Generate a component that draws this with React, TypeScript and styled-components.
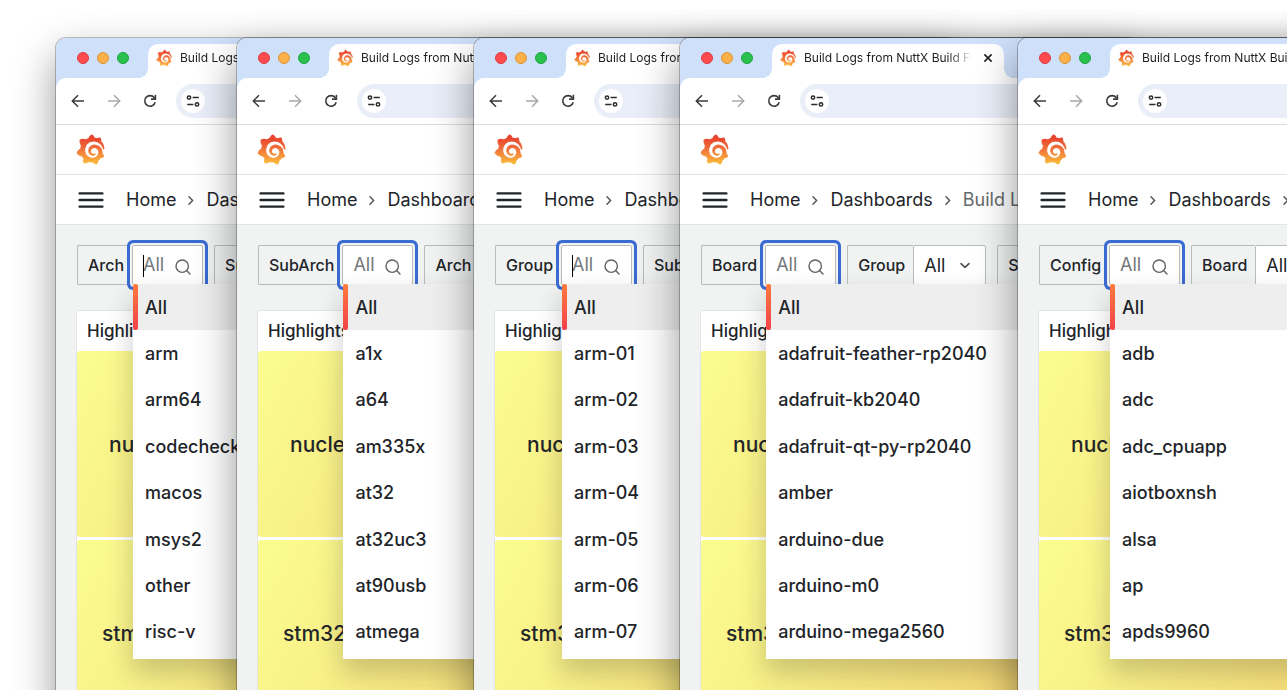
import React from "react";
import styled, { createGlobalStyle, css } from "styled-components";
import { SiGrafana } from "react-icons/si";

const INK = "#212428";
const PAGE = "#f1f3f3";
const LINE = "#b9bcbe";

const GlobalStyle = createGlobalStyle`
  * { box-sizing: border-box; }
  body {
    margin: 0;
    background: #fff;
    color: ${INK};
    font-family: Inter, "Liberation Sans", sans-serif;
  }
  button, input, select { font: inherit; color: inherit; }
`;

const Desktop = styled.main`
  position: relative;
  min-height: 100vh;
  overflow: hidden;
`;

const Defs = styled.svg`
  position: absolute;
  width: 0;
  height: 0;
`;

const BrowserWindow = styled.section<{ $left: number }>`
  position: absolute;
  isolation: isolate;
  top: 38px;
  bottom: -80px;
  left: ${(p) => p.$left}px;
  width: 900px;
  display: flex;
  flex-direction: column;
  overflow: hidden;
  border-radius: 10px;
  background: #fff;
  box-shadow:
    0 0 0 1px rgba(0, 0, 0, 0.24),
    0 18px 42px rgba(0, 0, 0, 0.42);
`;

const TabStrip = styled.div`
  display: flex;
  height: 48px;
  margin-bottom: -8px;
  padding: 6px 0 8px 21px;
  background: #cfe0fb;
`;

const Lights = styled.div`
  display: flex;
  align-items: center;
  gap: 8px;
  width: 71px;
  height: 28px;
`;

const Light = styled.button<{ $fill: string; $edge: string }>`
  width: 12px;
  height: 12px;
  padding: 0;
  border: 1px solid ${(p) => p.$edge};
  border-radius: 50%;
  background: ${(p) => p.$fill};
`;

const Tab = styled.div`
  position: relative;
  display: flex;
  align-items: flex-start;
  width: 232px;
  height: 34px;
  padding: 6px 10px 0 8px;
  border-radius: 10px 10px 0 0;
  background: #fff;

  &::before,
  &::after {
    content: "";
    position: absolute;
    bottom: 0;
    width: 10px;
    height: 10px;
  }
  &::before {
    right: 100%;
    background: radial-gradient(circle at 0 0, transparent 10px, #fff 10px);
  }
  &::after {
    left: 100%;
    background: radial-gradient(circle at 100% 0, transparent 10px, #fff 10px);
  }
`;

const TabTitle = styled.span`
  flex: 1;
  margin-left: 8px;
  overflow: hidden;
  white-space: nowrap;
  font-size: 12px;
  line-height: 16px;
  color: #1f1f1f;
  mask-image: linear-gradient(to right, #000 145px, transparent 168px);
`;

const PlainButton = styled.button`
  display: grid;
  place-items: center;
  padding: 0;
  border: 0;
  background: none;
`;

const TabClose = styled(PlainButton)`
  width: 12px;
  height: 16px;
`;

const Toolbar = styled.div`
  display: flex;
  align-items: center;
  height: 47px;
  padding-left: 12px;
  border-bottom: 1px solid #d9dbdd;
  border-radius: 10px 10px 0 0;
  background: #fff;
`;

const NavButton = styled(PlainButton)<{ $off?: boolean }>`
  width: 20px;
  height: 20px;
  margin-right: 16px;
  color: ${(p) => (p.$off ? "#a9a9a9" : "#3c3c3c")};
`;

const Omnibox = styled.div`
  flex: 1;
  display: flex;
  align-items: center;
  height: 34px;
  padding-left: 5px;
  border-radius: 17px;
  background: #e9eef8;
`;

const SiteInfo = styled(PlainButton)`
  width: 24px;
  height: 24px;
  border-radius: 50%;
  background: #fff;
`;

const Bar = styled.div`
  display: flex;
  align-items: center;
  height: 50px;
  padding: 0 20px;
  border-bottom: 1px solid #e3e4e5;
`;

const MenuButton = styled(PlainButton)`
  width: 30px;
  height: 30px;
  margin-right: 20px;
`;

const Crumbs = styled.nav`
  display: flex;
  align-items: center;
  gap: 12px;
  font-size: 18px;
  line-height: 24px;
  white-space: nowrap;
`;

const Crumb = styled.a<{ $current?: boolean }>`
  color: ${(p) => (p.$current ? "#65686b" : INK)};
  text-decoration: none;
`;

const Page = styled.div`
  flex: 1;
  display: flex;
  flex-direction: column;
  gap: 25px;
  padding: 20px 20px 0 21px;
  background: ${PAGE};
`;

const Variables = styled.div`
  display: flex;
  gap: 11px;
`;

const Variable = styled.div`
  position: relative;
  display: flex;
`;

const Label = styled.label`
  height: 40px;
  padding: 0 8px 0 10px;
  border: 1px solid ${LINE};
  border-right: 0;
  border-radius: 2px 0 0 2px;
  font-size: 16px;
  font-weight: 500;
  line-height: 38px;
  white-space: nowrap;
`;

const box = css`
  display: flex;
  align-items: center;
  height: 40px;
  border: 1px solid ${LINE};
  border-radius: 2px;
  background: #fff;
`;

const SearchBox = styled.div`
  ${box}
  position: relative;
  width: 71px;
  padding: 0 11px 0 10px;
  box-shadow: 0 0 0 2px ${PAGE}, 0 0 0 5px #3a6bd2;
  color: #5f6266;

  svg { margin-top: 4px; flex: none; }
`;

const SearchInput = styled.input`
  flex: 1;
  min-width: 0;
  padding: 0;
  border: 0;
  outline: 0;
  background: none;
  font-size: 18px;
  line-height: 24px;

  &::placeholder { color: #75787c; opacity: 1; }
`;

const Caret = styled.span`
  position: absolute;
  top: 9px;
  left: 10px;
  width: 1px;
  height: 22px;
  background: #000;
`;

const SelectBox = styled.div`
  ${box}
  position: relative;
  width: 73px;

  svg {
    position: absolute;
    right: 13px;
    pointer-events: none;
  }
`;

const Select = styled.select`
  width: 100%;
  height: 100%;
  padding: 0 10px;
  border: 0;
  appearance: none;
  background: none;
  font-size: 18px;
`;

const Menu = styled.ul`
  position: absolute;
  z-index: 2;
  top: 39px;
  left: calc(100% - 70px);
  display: grid;
  grid-auto-rows: 1fr;
  width: 290px;
  height: 375px;
  margin: 0;
  padding: 0 0 4px;
  list-style: none;
  background: #fff;
  box-shadow: 0 13px 24px 1px rgba(24, 26, 27, 0.2);
`;

const Option = styled.li<{ $active: boolean }>`
  position: relative;
  display: flex;
  align-items: center;
  padding-left: 12px;
  background: ${(p) => (p.$active ? "#eeeeee" : "transparent")};
  font-size: 18px;
  font-weight: 500;
  white-space: nowrap;

  ${(p) =>
    p.$active &&
    css`
      &::before {
        content: "";
        position: absolute;
        inset: 0 auto 0 0;
        width: 5px;
        border-radius: 2px;
        background: linear-gradient(#ff7a3c, #f2424a);
      }
    `}
`;

const Panel = styled.section`
  display: flex;
  flex-direction: column;
  border: 1px solid #e2e4e5;
  border-radius: 2px;
  margin-left: -1px;
  background: #fff;
`;

const PanelTitle = styled.h2`
  height: 40px;
  margin: 0;
  padding-left: 10px;
  font-size: 17px;
  font-weight: 500;
  line-height: 40px;
`;

const Tiles = styled.div`
  display: grid;
  gap: 3px;
`;

const Tile = styled.div<{ $indent: number }>`
  display: flex;
  align-items: center;
  height: 186px;
  padding-left: ${(p) => p.$indent}px;
  border-radius: 3px;
  background: linear-gradient(120deg, #fafd91, #f8ec85 160px, #f4d06f 420px);
  font-size: 21px;
  font-weight: 500;
  color: #24262a;
`;

const BackIcon = () => (
  <svg width="14" height="14" viewBox="0 0 14 14" fill="none" stroke="currentColor" strokeWidth="1.5">
    <path d="M13 7H1.6M7 1.2 1.3 7 7 12.8" />
  </svg>
);

const ForwardIcon = () => (
  <svg width="14" height="14" viewBox="0 0 14 14" fill="none" stroke="currentColor" strokeWidth="1.5">
    <path d="M1 7h11.4M7 1.2 12.7 7 7 12.8" />
  </svg>
);

const ReloadIcon = () => (
  <svg width="14" height="14" viewBox="0 0 14 14" fill="none" stroke="currentColor" strokeWidth="1.6">
    <path d="M12.2 8.2A5.3 5.3 0 1 1 11.2 3.6L12.4 5" />
    <path d="M12.4 0.8V5.1H8" />
  </svg>
);

const TuneIcon = () => (
  <svg width="14" height="12" viewBox="0 0 14 12" fill="none" stroke="#2b2b2b" strokeWidth="1.5">
    <circle cx="3" cy="2.6" r="1.7" />
    <path d="M6.6 2.6h6.2M1.2 9.4h6.2" />
    <circle cx="11" cy="9.4" r="1.7" />
  </svg>
);

const CloseIcon = () => (
  <svg width="10" height="10" viewBox="0 0 10 10" stroke="#1f1f1f" strokeWidth="1.6">
    <path d="M1.4 1.4l7.2 7.2M8.6 1.4 1.4 8.6" />
  </svg>
);

const HamburgerIcon = () => (
  <svg width="26" height="18" viewBox="0 0 26 18" stroke={INK} strokeWidth="2.4" strokeLinecap="round">
    <path d="M1.6 2.4h22.8M1.6 9h22.8M1.6 15.6h22.8" />
  </svg>
);

const CrumbArrow = () => (
  <svg width="6" height="10" viewBox="0 0 6 10" fill="none" stroke="#55585b" strokeWidth="1.5" strokeLinecap="round">
    <path d="M1 1.8 4.6 5.5 1 9.2" />
  </svg>
);

const SearchIcon = () => (
  <svg width="16" height="16" viewBox="0 0 16 16" fill="none" stroke="currentColor" strokeWidth="1.4" strokeLinecap="round">
    <circle cx="7.2" cy="7.2" r="6.2" />
    <path d="M11.8 11.8 15 15" />
  </svg>
);

const ChevronDown = () => (
  <svg width="14" height="10" viewBox="0 0 14 10" fill="none" stroke="#4a4d50" strokeWidth="1.5" strokeLinecap="round" strokeLinejoin="round">
    <path d="M3 3.6 7 7.4 11 3.6" />
  </svg>
);

const GrafanaLogo = ({ size }: { size: number }) => (
  <SiGrafana
    size={size}
    fill="url(#grafana)"
    stroke="url(#grafana)"
    strokeWidth="0.9"
    overflow="visible"
    aria-label="Grafana"
  />
);

type View = {
  left: number;
  name: string;
  caret?: boolean;
  others: string[];
  options: string[];
};

const views: View[] = [
  {
    left: 56,
    name: "Arch",
    caret: true,
    others: ["SubArch"],
    options: ["All", "arm", "arm64", "codechecker", "macos", "msys2", "other", "risc-v"],
  },
  {
    left: 237,
    name: "SubArch",
    others: ["Arch"],
    options: ["All", "a1x", "a64", "am335x", "at32", "at32uc3", "at90usb", "atmega"],
  },
  {
    left: 474,
    name: "Group",
    caret: true,
    others: ["SubArch"],
    options: ["All", "arm-01", "arm-02", "arm-03", "arm-04", "arm-05", "arm-06", "arm-07"],
  },
  {
    left: 680,
    name: "Board",
    others: ["Group", "SubArch"],
    options: [
      "All",
      "adafruit-feather-rp2040",
      "adafruit-kb2040",
      "adafruit-qt-py-rp2040",
      "amber",
      "arduino-due",
      "arduino-m0",
      "arduino-mega2560",
    ],
  },
  {
    left: 1018,
    name: "Config",
    others: ["Board"],
    options: ["All", "adb", "adc", "adc_cpuapp", "aiotboxnsh", "alsa", "ap", "apds9960"],
  },
];

function BuildLogsWindow({ left, name, caret, others, options }: View) {
  const id = `var-${name}`;
  return (
    <BrowserWindow $left={left}>
      <TabStrip>
        <Lights>
          <Light $fill="#fe4c4e" $edge="#dd3b40" aria-label="Close window" />
          <Light $fill="#fbb04a" $edge="#dd9638" aria-label="Minimize window" />
          <Light $fill="#29c14c" $edge="#1ea63d" aria-label="Zoom window" />
        </Lights>
        <Tab>
          <GrafanaLogo size={16} />
          <TabTitle>Build Logs from NuttX Build Farm</TabTitle>
          <TabClose aria-label="Close tab">
            <CloseIcon />
          </TabClose>
        </Tab>
      </TabStrip>
      <Toolbar>
        <NavButton aria-label="Back">
          <BackIcon />
        </NavButton>
        <NavButton $off aria-label="Forward">
          <ForwardIcon />
        </NavButton>
        <NavButton aria-label="Reload">
          <ReloadIcon />
        </NavButton>
        <Omnibox>
          <SiteInfo aria-label="Site information">
            <TuneIcon />
          </SiteInfo>
        </Omnibox>
      </Toolbar>
      <Bar>
        <GrafanaLogo size={29} />
      </Bar>
      <Bar>
        <MenuButton aria-label="Open menu">
          <HamburgerIcon />
        </MenuButton>
        <Crumbs>
          <Crumb href="#home">Home</Crumb>
          <CrumbArrow />
          <Crumb href="#dashboards">Dashboards</Crumb>
          <CrumbArrow />
          <Crumb href="#build-logs" $current>
            Build Logs
          </Crumb>
        </Crumbs>
      </Bar>
      <Page>
        <Variables>
          <Variable>
            <Label htmlFor={id}>{name}</Label>
            <SearchBox>
              <SearchInput id={id} placeholder="All" />
              {caret && <Caret />}
              <SearchIcon />
            </SearchBox>
            <Menu role="listbox">
              {options.map((option, i) => (
                <Option key={option} role="option" aria-selected={i === 0} $active={i === 0}>
                  {option}
                </Option>
              ))}
            </Menu>
          </Variable>
          {others.map((other) => (
            <Variable key={other}>
              <Label htmlFor={`${id}-${other}`}>{other}</Label>
              <SelectBox>
                <Select id={`${id}-${other}`}>
                  <option>All</option>
                </Select>
                <ChevronDown />
              </SelectBox>
            </Variable>
          ))}
        </Variables>
        <Panel>
          <PanelTitle>Highlights</PanelTitle>
          <Tiles>
            <Tile $indent={32}>nucleo</Tile>
            <Tile $indent={25}>stm32</Tile>
          </Tiles>
        </Panel>
      </Page>
    </BrowserWindow>
  );
}

export default function App() {
  return (
    <Desktop>
      <GlobalStyle />
      <Defs aria-hidden="true">
        <linearGradient id="grafana" x1="0" y1="0" x2="0" y2="1">
          <stop offset="0.1" stopColor="#e8432e" />
          <stop offset="0.5" stopColor="#f0743a" />
          <stop offset="1" stopColor="#fbbd3c" />
        </linearGradient>
      </Defs>
      {views.map((view) => (
        <BuildLogsWindow key={view.name} {...view} />
      ))}
    </Desktop>
  );
}
